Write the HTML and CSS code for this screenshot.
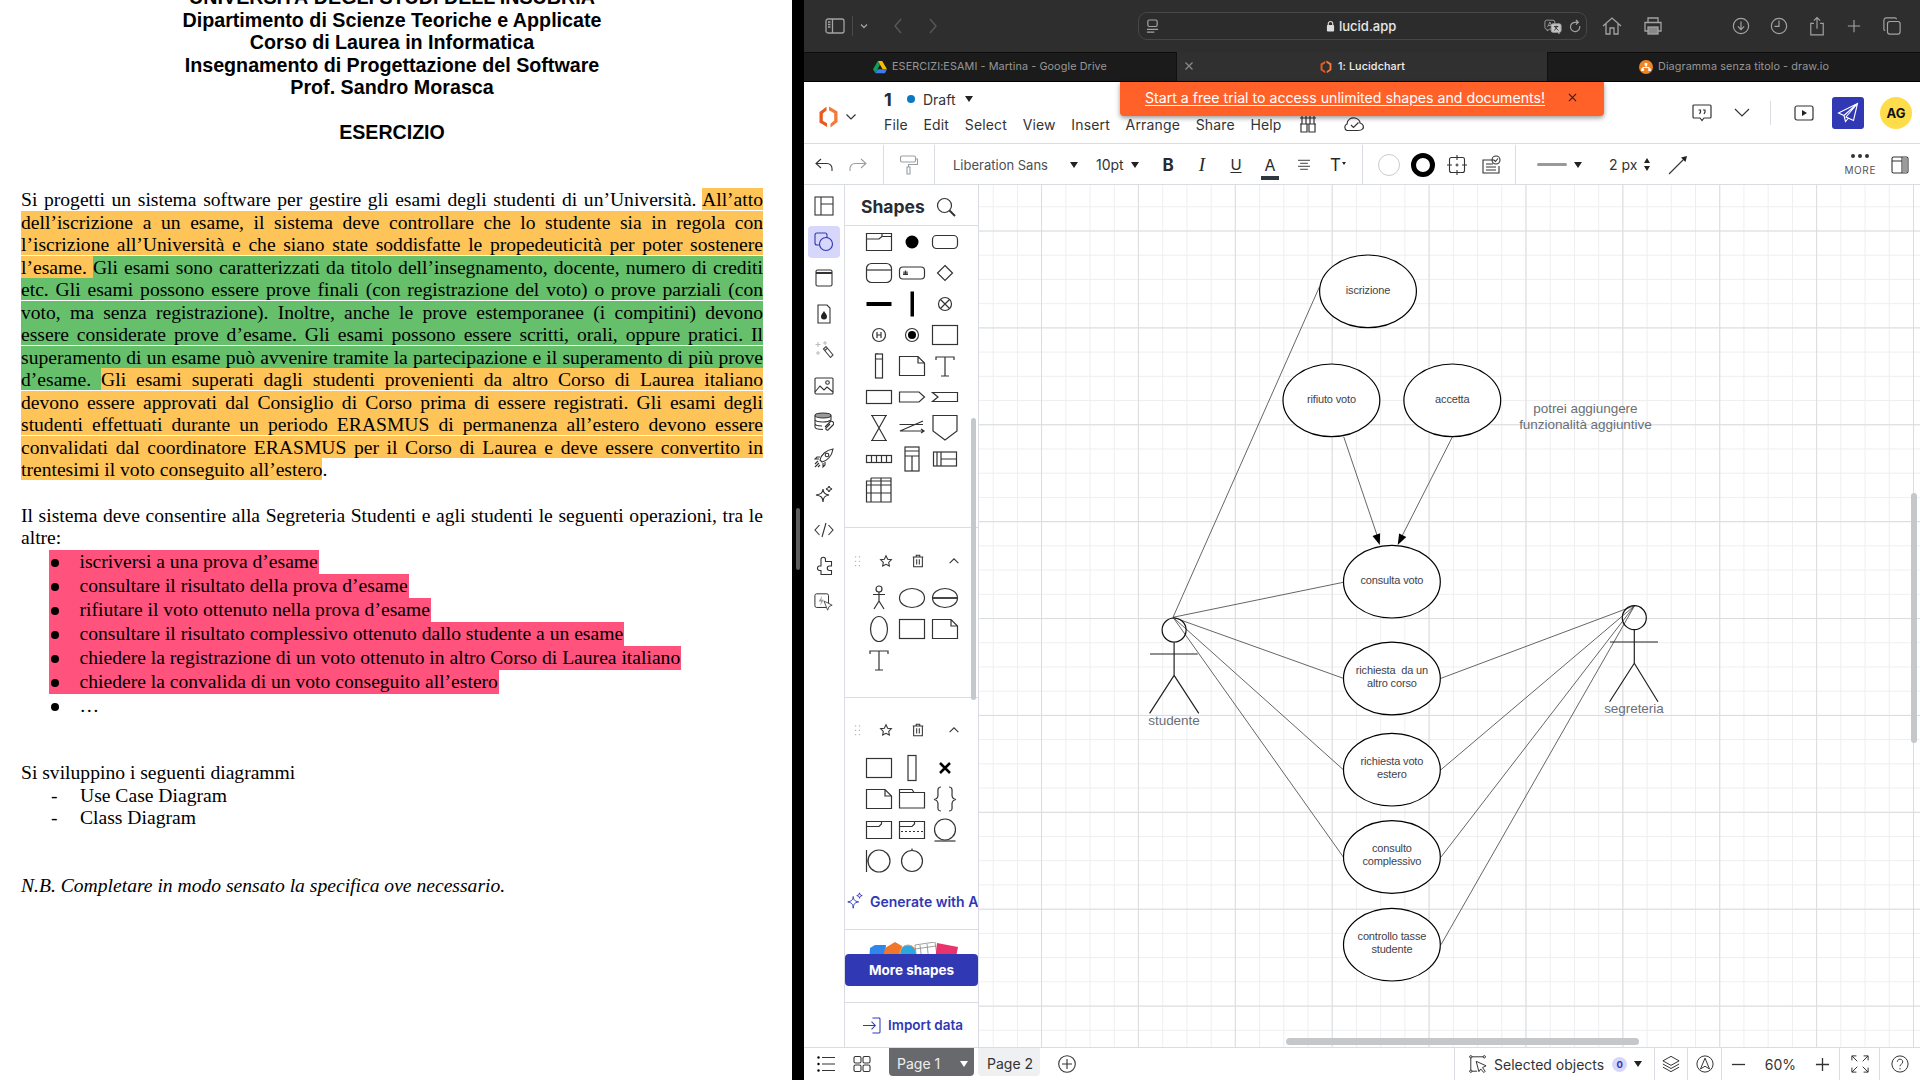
FILE: index.html
```html
<!DOCTYPE html>
<html lang="it">
<head>
<meta charset="utf-8">
<title>Lucidchart</title>
<link rel="stylesheet" href="styles.css">
</head>
<body>
<svg class="defs" width="0" height="0" aria-hidden="true">
  <defs>
    <symbol id="s-rect" viewBox="0 0 28 28"><rect x="1.5" y="4.5" width="25" height="19" /></symbol>
    <symbol id="s-note" viewBox="0 0 28 28"><path d="M1.5 4.500H20L26.500 11V23.500H1.500Z M20 4.500V11H26.500" /></symbol>
    <symbol id="s-t" viewBox="0 0 28 28"><path d="M5 8V5H23V8 M14 5V24 M10 24H18" /></symbol>
    <symbol id="s-star" viewBox="0 0 16 16"><path d="M8 2l1.900 3.900 4.300.6-3.100 3 .7 4.300L8 11.800l-3.800 2 .7-4.300-3.100-3 4.300-.6Z" /></symbol>
    <symbol id="s-trash" viewBox="0 0 16 16"><path d="M2 3.500H14 M6 3.500V1.500H10V3.500 M3 3.500V14.500H13V3.500 M6.500 6V12 M9.500 6V12" /></symbol>
    <symbol id="s-up" viewBox="0 0 16 16"><path d="M3 10.500L8 5.500L13 10.500" /></symbol>
    <symbol id="s-drag" viewBox="0 0 8 14"><path d="M1 1h1.500v1.500H1zM5.500 1H7v1.500H5.500zM1 6h1.500v1.500H1zM5.500 6H7v1.500H5.500zM1 11h1.500v1.500H1zM5.500 11H7v1.500H5.500z" /></symbol>
  </defs>
</svg>

<main class="desk">
  <section class="doc-pane">
    <article class="doc">
      <header class="doc-title">
        <div>UNIVERSITÀ DEGLI STUDI DELL’INSUBRIA</div>
        <div>Dipartimento di Scienze Teoriche e Applicate</div>
        <div>Corso di Laurea in Informatica</div>
        <div>Insegnamento di Progettazione del Software</div>
        <div>Prof. Sandro Morasca</div>
      </header>
      <h1 class="doc-h">ESERCIZIO</h1>
      <p class="doc-p first">Si progetti un sistema software per gestire gli esami degli studenti di un’Università. <span class="hl-o">All’atto dell’iscrizione a un esame, il sistema deve controllare che lo studente sia in regola con l’iscrizione all’Università e che siano state soddisfatte le propedeuticità per poter sostenere l’esame. </span><span class="hl-g">Gli esami sono caratterizzati da titolo dell’insegnamento, docente, numero di crediti etc. Gli esami possono essere prove finali (con registrazione del voto) o prove parziali (con voto, ma senza registrazione). Inoltre, anche le prove estemporanee (i compitini) devono essere considerate prove d’esame. Gli esami possono essere scritti, orali, oppure pratici. Il superamento di un esame può avvenire tramite la partecipazione e il superamento di più prove d’esame. </span><span class="hl-o">Gli esami superati dagli studenti provenienti da altro Corso di Laurea italiano devono essere approvati dal Consiglio di Corso prima di essere registrati. Gli esami degli studenti effettuati durante un periodo ERASMUS di permanenza all’estero devono essere convalidati dal coordinatore ERASMUS per il Corso di Laurea e deve essere convertito in trentesimi il voto conseguito all’estero</span>.</p>
      <p class="doc-p second">Il sistema deve consentire alla Segreteria Studenti e agli studenti le seguenti operazioni, tra le altre:</p>
      <ul class="ops">
        <li class="pink">iscriversi a una prova d’esame</li>
        <li class="pink">consultare il risultato della prova d’esame</li>
        <li class="pink">rifiutare il voto ottenuto nella prova d’esame</li>
        <li class="pink">consultare il risultato complessivo ottenuto dallo studente a un esame</li>
        <li class="pink">chiedere la registrazione di un voto ottenuto in altro Corso di Laurea italiano</li>
        <li class="pink">chiedere la convalida di un voto conseguito all’estero</li>
        <li>…</li>
      </ul>
      <p class="doc-p third">Si sviluppino i seguenti diagrammi</p>
      <ul class="diag">
        <li>Use Case Diagram</li>
        <li>Class Diagram</li>
      </ul>
      <p class="doc-p nb">N.B. Completare in modo sensato la specifica ove necessario.</p>
    </article>
  </section>

  <div class="divider"><span class="grabber"></span></div>

  <section class="browser">
    <div class="chrome">
      <svg class="cr cr-side" viewBox="0 0 20 16"><rect x="1" y="1" width="18" height="14" rx="2"/><path d="M7.500 1V15 M3 4H5.500 M3 6.500H5.500 M3 9H5.500"/></svg>
      <span class="cr-sep"></span>
      <svg class="cr cr-chev" viewBox="0 0 10 6"><path d="M2 1.500L5 4.500L8 1.500"/></svg>
      <svg class="cr cr-nav dim" viewBox="0 0 10 16"><path d="M8 1L2 8L8 15"/></svg>
      <svg class="cr cr-nav dim nav2" viewBox="0 0 10 16"><path d="M2 1L8 8L2 15"/></svg>
      <div class="addr">
        <svg class="cr cr-page" viewBox="0 0 14 16"><rect x="2" y="1" width="10" height="7" rx="1.500"/><path d="M1 11H13 M1 14H9"/></svg>
        <span class="addr-url"><svg class="lock" viewBox="0 0 10 13"><path d="M2.500 6V4a2.500 2.500 0 0 1 5 0V6" fill="none" stroke="#ddd" stroke-width="1.200"/><rect x="1" y="5.500" width="8" height="7" rx="1" fill="#ddd"/></svg>lucid.app</span>
        <svg class="cr cr-trans" viewBox="0 0 20 16"><path d="M3 1H10A2 2 0 0 1 12 3V9A2 2 0 0 1 10 11H6L3.500 13V11H3A2 2 0 0 1 1 9V3A2 2 0 0 1 3 1Z M4 8.500L6.500 3L9 8.500 M5 6.800H8"/><path d="M10 5H17A2 2 0 0 1 19 7V12.500A2 2 0 0 1 17 14.500V16L15 14.500H10A2 2 0 0 1 8 12.500V7A2 2 0 0 1 10 5Z" fill="#c4c4c4"/><path d="M11 8H16 M13.500 7V8 M15 8L11.500 12.500 M12 8.500L16 12.500" stroke="#2e2e2e"/></svg>
        <svg class="cr cr-rel" viewBox="0 0 14 16"><path d="M11.500 7.500A5 5 0 1 1 7 3.500H9 M7.500 1L10 3.500L7.500 6"/></svg>
      </div>
      <svg class="cr cr-home" viewBox="0 0 20 20"><path d="M1 10L10 2L19 10 M4 8V18H8V12H12V18H16V8"/></svg>
      <svg class="cr cr-print" viewBox="0 0 20 20"><path d="M5 6V2H15V6 M5 15H2V6.500H18V15H15"/><rect x="5" y="11" width="10" height="7" fill="#888"/></svg>
      <svg class="cr cr-dl" viewBox="0 0 20 20"><circle cx="10" cy="10" r="8.500"/><path d="M10 5V14 M6.500 10.500L10 14L13.500 10.500"/></svg>
      <svg class="cr cr-clock" viewBox="0 0 20 20"><circle cx="10" cy="10" r="8.500"/><path d="M10 4V10.500H5"/></svg>
      <svg class="cr cr-share" viewBox="0 0 18 22"><path d="M5.500 8H2V21H16V8H12.500 M9 14V2 M5.500 5L9 1.500L12.500 5"/></svg>
      <svg class="cr cr-plus" viewBox="0 0 16 16"><path d="M8 1V15 M1 8H15"/></svg>
      <svg class="cr cr-tabs" viewBox="0 0 20 20"><rect x="5" y="5" width="14" height="14" rx="2.500"/><path d="M15 2.500A1.500 1.500 0 0 0 13.500 1H3.500A2.500 2.500 0 0 0 1 3.500V13.500A1.500 1.500 0 0 0 2.500 15"/></svg>
    </div>

    <div class="tabs">
      <div class="tab tab-a">
        <svg class="fav" viewBox="0 0 16 14"><path d="M5.500 0H10.500L16 9.500H11Z" fill="#fbbc04"/><path d="M5.500 0L8 4.500L2.800 14L0 9.500Z" fill="#0f9d58"/><path d="M2.800 14L5.300 9.500H16L13.500 14Z" fill="#3b7dee"/></svg>
        <span>ESERCIZI:ESAMI - Martina - Google Drive</span>
      </div>
      <div class="tab tab-b">
        <svg class="tab-x" viewBox="0 0 10 10"><path d="M1.500 1.500L8.500 8.500 M8.500 1.500L1.500 8.500"/></svg>
        <svg class="fav" viewBox="0 0 16 18"><path d="M8.500 0.500L15 4.500V13L9 17V14L12.500 11.800V6L8.500 3.500Z" fill="#f4793a"/><path d="M7 1.200V4.200L3.500 6.300V11.800L7 14V17L1 13V4.800Z" fill="#e85a1e"/></svg>
        <span>1: Lucidchart</span>
      </div>
      <div class="tab tab-c">
        <svg class="fav" viewBox="0 0 16 16"><circle cx="8" cy="8" r="8" fill="#f08528"/><path d="M6.500 3.500H9.500V6.500H8.500V8H11.500L12.500 9.800H13.500V12.500H10.500V9.800H11L10.800 9H5.200L5 9.800H5.500V12.500H2.500V9.800H3.500L4.500 8H7.500V6.500H6.500Z" fill="#fff"/></svg>
        <span>Diagramma senza titolo - draw.io</span>
      </div>
    </div>

    <div class="app">
      <div class="toast"><a class="toast-link">Start a free trial to access unlimited shapes and documents!</a>
        <svg class="toast-x" viewBox="0 0 10 10"><path d="M1 1L9 9 M9 1L1 9"/></svg>
      </div>

      <header class="app-head">
        <div class="brand">
          <svg class="logo" viewBox="0 0 19 22"><path d="M10 .500L18.500 5.500V16L11.500 21.500V17.800L15.200 14.500V7.300L10 4.200Z" fill="#f4793a"/><path d="M8 21L.500 16.500V6L7.500 .800V4.400L3.800 7.500V14.700L8 17.300Z" fill="#e85a1e"/></svg>
          <svg class="ico ico-chev" viewBox="0 0 12 8"><path d="M1.500 1.500L6 6L10.500 1.500"/></svg>
        </div>
        <div class="titlecol">
          <div class="titlerow">
            <span class="docnum">1</span><span class="dot"></span><span class="draft">Draft</span><span class="tri"></span>
          </div>
          <nav class="menu">
            <span>File</span><span>Edit</span><span>Select</span><span>View</span><span>Insert</span><span>Arrange</span><span>Share</span><span>Help</span>
            <svg class="ico ico-gift" viewBox="0 0 18 20"><path d="M3 1V10 M7 1V10 M11 1V10 M15 1V10 M1 4H17 M1 10H17 M2 10V18H8V10 M10 10V18H16V10"/></svg>
            <svg class="ico ico-cloud" viewBox="0 0 22 16"><path d="M6 14.500H4A3.500 3.500 0 0 1 4 8C4 4 8 1 12 2C15 3 17 5 17 7C20 7.500 21.500 11 19.500 13C18.500 14.300 17 14.500 15 14.500Z"/><path d="M8 9L10.500 11.500L15.500 6.500"/></svg>
          </nav>
        </div>
        <div class="head-right">
          <svg class="ico ico-comment" viewBox="0 0 20 18"><path d="M2 1H18A1 1 0 0 1 19 2V13A1 1 0 0 1 18 14H12L10 16.500L8 14H2A1 1 0 0 1 1 13V2A1 1 0 0 1 2 1Z M6.500 6H8.500V8L7.500 10 M11 6H13V8L12 10"/></svg>
          <svg class="ico ico-down" viewBox="0 0 16 9"><path d="M1 1L8 8L15 1"/></svg>
          <span class="head-sep"></span>
          <svg class="ico ico-play" viewBox="0 0 20 16"><rect x="1" y="1" width="18" height="14" rx="2"/><path class="fill" d="M8 5L13 8L8 11Z"/></svg>
          <button class="send"><svg viewBox="0 0 22 22"><path d="M20.500 1.500L1.500 11L7 13.500L20.500 1.500L9 15L16.500 18.500Z M7 13.500L8.500 19.500L11.500 16" fill="none" stroke="#fff" stroke-width="1.100"/></svg></button>
          <span class="avatar">AG</span>
        </div>
      </header>

      <div class="toolbar">
        <div class="tg tg-a">
          <svg class="ti" viewBox="0 0 20 16"><path d="M7 2L2 6.500L7 11 M2 6.500H13A5 5 0 0 1 18 11.500V14"/></svg>
          <svg class="ti off" viewBox="0 0 20 16"><path d="M13 2L18 6.500L13 11 M18 6.500H7A5 5 0 0 0 2 11.500V14"/></svg>
        </div>
        <div class="tg tg-b">
          <svg class="ti off" viewBox="0 0 20 20"><rect x="1.500" y="1" width="15" height="6" rx="1.500"/><path d="M16.500 4H18.500V9.500H9.500V12 M8 12H11V19H8Z"/></svg>
        </div>
        <div class="tg tg-c">
          <div class="sel sel-font"><span>Liberation Sans</span><span class="tri"></span></div>
          <div class="sel sel-size"><span>10pt</span><span class="tri"></span></div>
          <span class="tbtn b">B</span>
          <span class="tbtn i">I</span>
          <span class="tbtn u">U</span>
          <span class="tbtn a">A</span>
          <span class="tbtn"><svg class="ti small" viewBox="0 0 16 14"><path d="M1 1.500H15 M3.500 5H12.500 M1 8.500H15 M3.500 12H12.500"/></svg></span>
          <span class="tbtn t">T<span class="tinytri"></span></span>
        </div>
        <div class="tg tg-d">
          <span class="tbtn"><span class="swatch"></span></span>
          <span class="tbtn"><span class="ring"></span></span>
          <span class="tbtn"><svg class="ti" viewBox="0 0 20 20"><rect x="2.500" y="2.500" width="15" height="15" rx="2"/><path d="M10 0V5 M10 15V20 M0 10H5 M15 10H20 M8.500 10H11.500 M10 8.500V11.500"/></svg></span>
          <span class="tbtn"><svg class="ti" viewBox="0 0 20 20"><path d="M13 5H2V18H18V11 M5 9H12 M5 12H15 M5 15H15"/><circle cx="15" cy="5" r="4"/><path d="M13 5L14.500 6.500L17 3.500"/></svg></span>
        </div>
        <div class="tg tg-e">
          <span class="linesample"></span><span class="tri"></span>
          <span class="px">2 px</span>
          <span class="stepper"><span class="tri up"></span><span class="tri"></span></span>
          <svg class="ti arrow" viewBox="0 0 20 20"><path d="M1 19L17 3"/><path class="fill" d="M19 1L17.500 7L13 2.500Z"/></svg>
        </div>
        <div class="tg tg-f">
          <div class="more"><span class="dots"><i></i><i></i><i></i></span><span class="more-t">MORE</span></div>
          <svg class="ti panelico" viewBox="0 0 18 18"><rect x="1" y="1" width="16" height="16" rx="1.500"/><path class="fill" d="M12 2H16V16H12Z" opacity=".45"/><path d="M1 5H11 M11 1V17"/></svg>
        </div>
      </div>

      <div class="work">
        <nav class="rail">
          <svg class="ri" viewBox="0 0 20 20"><rect x="1" y="1" width="18" height="18"/><path d="M7 1V19 M7 8H19"/></svg>
          <span class="ri-on"><svg class="ri blue" viewBox="0 0 20 20"><rect x="1" y="1" width="12" height="12" rx="2"/><circle cx="12" cy="12" r="6.500" fill="#d6d7fb"/></svg></span>
          <svg class="ri" viewBox="0 0 20 20"><rect x="2" y="2" width="16" height="16" rx="1.500"/><path d="M2 5H18" stroke-width="2"/></svg>
          <svg class="ri" viewBox="0 0 20 20"><path d="M4 1H13L16 4V19H4Z"/><path class="fill" d="M10 7C11.500 9.500 13 10.500 13 12.500A3 3 0 0 1 7 12.500C7 10.500 8.500 9.500 10 7Z"/></svg>
          <svg class="ri pale" viewBox="0 0 20 20"><path d="M4 2V7 M1.500 4.500H6.500 M11 1V5 M9 3H13 M4 11V15 M2 13H6"/><path class="dk" d="M9.500 9L12 6.500L19 15L16.500 17.500Z M11 10.500L13.500 8"/></svg>
          <svg class="ri" viewBox="0 0 20 18"><rect x="1" y="1" width="18" height="16" rx="1"/><path d="M1 15L6 9L10 13L13 10L19 15"/><circle cx="13.500" cy="5.500" r="1.800"/></svg>
          <svg class="ri" viewBox="0 0 20 20"><ellipse class="sh" cx="9" cy="3.500" rx="8" ry="2.500"/><path d="M1 3.500V15C1 16.500 5 17.500 9 17.500 M1 7.500C1 9 5 10 9 10C12 10 15 9.500 17 8V3.500 M1 11.500C1 13 4 14 8 14"/><path d="M11 15L16 10A2 2 0 0 1 19 13L14 18A1.500 1.500 0 0 1 12 16L16 12"/></svg>
          <svg class="ri" viewBox="0 0 20 20"><path d="M8 14L6 12C7 7 12 2 19 1C18 8 13 13 8 14Z M6 9H3L1 11H5 M11 14V17L9 19V15"/><circle cx="13" cy="7" r="1.800"/><path d="M1 16L4 13 M1 19L5 15 M4 19L6 17"/></svg>
          <svg class="ri" viewBox="0 0 20 20"><path d="M9 5C9.500 9 10.500 10 15 11C10.500 12 9.500 13 9 18C8.500 13 7.500 12 2 11C7.500 10 8.500 9 9 5Z M15 2C15.300 4 16 4.500 18 5C16 5.500 15.300 6 15 8C14.700 6 14 5.500 12 5C14 4.500 14.700 4 15 2Z"/></svg>
          <svg class="ri" viewBox="0 0 20 16"><path d="M5.500 3L1 8L5.500 13 M14.500 3L19 8L14.500 13 M12 1L8 15"/></svg>
          <svg class="ri" viewBox="0 0 20 20"><path d="M7 3.500A2.200 2.200 0 0 1 11.500 3.500V5.500H17.500V10H15.500A2.200 2.200 0 0 0 15.500 14.500H17.500V18.500H7V14.500H5A2.400 2.400 0 0 1 5 10H7V5.500Z"/></svg>
          <svg class="ri" viewBox="0 0 22 20"><rect x="1" y="1" width="15" height="15" rx="2"/><path class="fill" d="M9 3L5 9.500H8L6.500 14L11 7.500H8Z" opacity=".45"/><path class="wfill" d="M11 9L20 13.500L16.500 15L15 19Z"/></svg>
        </nav>

        <aside class="panel">
          <div class="panel-head">
            <h2>Shapes</h2>
            <svg class="sq search" viewBox="0 0 20 20"><circle cx="8.500" cy="8.500" r="7"/><path d="M13.500 13.500L19 19" stroke-width="2"/></svg>
          </div>
          <div class="sec sec1">
            <div class="shapes">
              <svg class="sq" viewBox="0 0 28 28"><path d="M1.500 5.500H26.500V22.500H1.500Z M1.500 11H14L17 8.500V5.500 M17 8.500H26.500"/></svg>
              <svg class="sq" viewBox="0 0 28 28"><circle class="solid" cx="14" cy="14" r="6.500"/></svg>
              <svg class="sq" viewBox="0 0 28 28"><rect x="1.500" y="7.500" width="25" height="13" rx="4"/></svg>
              <svg class="sq" viewBox="0 0 28 28"><rect x="1.500" y="4.500" width="25" height="19" rx="5"/><path d="M1.500 11H26.500"/></svg>
              <svg class="sq" viewBox="0 0 28 28"><rect x="1.500" y="8" width="25" height="12" rx="3.500"/><path d="M5 15.500H10 M6 15V12.500 M7.500 15V11.500 M9 15V12.500"/></svg>
              <svg class="sq" viewBox="0 0 28 28"><path d="M14 6.500L21.500 14L14 21.500L6.500 14Z"/></svg>
              <svg class="sq" viewBox="0 0 28 28"><rect class="solid" x="1.500" y="12" width="25" height="4"/></svg>
              <svg class="sq" viewBox="0 0 28 28"><rect class="solid" x="12.500" y="1.500" width="3.500" height="25"/></svg>
              <svg class="sq" viewBox="0 0 28 28"><circle cx="14" cy="14" r="6.500"/><path d="M9.500 9.500L18.500 18.500 M18.500 9.500L9.500 18.500"/></svg>
              <svg class="sq" viewBox="0 0 28 28"><circle cx="14" cy="14" r="6.500"/><path d="M12 11V17 M16 11V17 M12 14H16"/></svg>
              <svg class="sq" viewBox="0 0 28 28"><circle cx="14" cy="14" r="6.500"/><circle class="solid" cx="14" cy="14" r="4"/></svg>
              <svg class="sq"><use href="#s-rect"/></svg>
              <svg class="sq" viewBox="0 0 28 28"><rect x="10.500" y="2" width="7" height="24"/><path d="M10.500 7H17.500 M12 2V1 "/></svg>
              <svg class="sq"><use href="#s-note"/></svg>
              <svg class="sq"><use href="#s-t"/></svg>
              <svg class="sq" viewBox="0 0 28 28"><rect x="1.500" y="7.500" width="25" height="13"/></svg>
              <svg class="sq" viewBox="0 0 28 28"><path d="M1.500 9H21L26.500 14L21 19H1.500Z"/></svg>
              <svg class="sq" viewBox="0 0 28 28"><path d="M1.500 9.500H26.500V18.500H1.500L7 14Z"/></svg>
              <svg class="sq" viewBox="0 0 28 28"><path d="M6 1.500H22 M6 26.500H22 M7 1.500L21 26.500 M21 1.500L7 26.500"/></svg>
              <svg class="sq" viewBox="0 0 28 28"><path d="M1.500 10.500H25 M25 7L2 17H26 M23 15L26 17L23 19"/></svg>
              <svg class="sq" viewBox="0 0 28 28"><path d="M2 1.500H26V17L14 26L2 17Z"/></svg>
              <svg class="sq" viewBox="0 0 28 28"><rect x="1.500" y="10.500" width="25" height="7"/><path d="M6.500 10.500V17.500 M11.500 10.500V17.500 M16.500 10.500V17.500 M21.500 10.500V17.500"/></svg>
              <svg class="sq" viewBox="0 0 28 28"><rect x="7" y="2" width="14" height="24"/><path d="M7 6H21 M7 11H21 M14 11V26"/></svg>
              <svg class="sq" viewBox="0 0 28 28"><rect x="2.500" y="7" width="23" height="14"/><path d="M6 7V21 M10 7V21 M10 14H25.500"/></svg>
              <svg class="sq" viewBox="0 0 28 28"><path d="M1.500 5H26V26H1.500Z M6 2V26 M16 2V26 M6 2H26V5 M1.500 9H26 M1.500 17H26"/></svg>
            </div>
          </div>
          <div class="sec sec2">
            <div class="sec-head">
              <svg class="sh-ic drag"><use href="#s-drag"/></svg>
              <svg class="sh-ic"><use href="#s-star"/></svg>
              <svg class="sh-ic"><use href="#s-trash"/></svg>
              <svg class="sh-ic"><use href="#s-up"/></svg>
            </div>
            <div class="shapes">
              <svg class="sq" viewBox="0 0 28 28"><circle cx="14" cy="5" r="3"/><path d="M14 8V17 M8 10.500H20 M14 17L9 25 M14 17L19 25"/></svg>
              <svg class="sq" viewBox="0 0 28 28"><ellipse cx="14" cy="14" rx="12.500" ry="9.500"/></svg>
              <svg class="sq" viewBox="0 0 28 28"><ellipse cx="14" cy="14" rx="12.500" ry="9.500"/><path d="M1.500 14H26.500" stroke-width="1.800"/></svg>
              <svg class="sq" viewBox="0 0 28 28"><ellipse cx="14" cy="14" rx="8.500" ry="12.500"/></svg>
              <svg class="sq"><use href="#s-rect"/></svg>
              <svg class="sq"><use href="#s-note"/></svg>
              <svg class="sq"><use href="#s-t"/></svg>
            </div>
          </div>
          <div class="sec sec3">
            <div class="sec-head">
              <svg class="sh-ic drag"><use href="#s-drag"/></svg>
              <svg class="sh-ic"><use href="#s-star"/></svg>
              <svg class="sh-ic"><use href="#s-trash"/></svg>
              <svg class="sh-ic"><use href="#s-up"/></svg>
            </div>
            <div class="shapes">
              <svg class="sq"><use href="#s-rect"/></svg>
              <svg class="sq" viewBox="0 0 28 28"><rect x="10" y="1.500" width="8" height="25"/></svg>
              <svg class="sq" viewBox="0 0 28 28"><path class="thick" d="M9 9L19 19 M19 9L9 19"/></svg>
              <svg class="sq"><use href="#s-note"/></svg>
              <svg class="sq" viewBox="0 0 28 28"><path d="M1.500 7.500V23H26.500V7.500H16L14 4.500H1.500V7.500H16"/></svg>
              <svg class="sq" viewBox="0 0 28 28"><path d="M10 2C6 2 7 6 7 10C7 12 6 14 3 14.500C6 15 7 17 7 19C7 23 6 26 10 26 M18 2C22 2 21 6 21 10C21 12 22 14 25 14.500C22 15 21 17 21 19C21 23 22 26 18 26"/></svg>
              <svg class="sq" viewBox="0 0 28 28"><path d="M1.500 5.500H26.500V22.500H1.500Z M1.500 10.500H14L16.500 8V5.500"/></svg>
              <svg class="sq" viewBox="0 0 28 28"><path d="M1.500 5.500H26.500V22.500H1.500Z M1.500 10.500H14L16.500 8V5.500"/><path d="M3 15.500H25" stroke-dasharray="2 2"/></svg>
              <svg class="sq" viewBox="0 0 28 28"><circle cx="14" cy="13.500" r="10.500"/><path d="M3.500 25H24.500"/></svg>
              <svg class="sq" viewBox="0 0 28 28"><path d="M1.500 3V25 M1.500 14H3.500"/><circle cx="14" cy="14" r="11"/></svg>
              <svg class="sq" viewBox="0 0 28 28"><circle cx="14" cy="14" r="10.500"/><path d="M14 1.500V4"/></svg>
            </div>
            <div class="genai">
              <svg class="gen-ic" viewBox="0 0 20 20"><path d="M8 5C8.500 9 9.500 10 14 11C9.500 12 8.500 13 8 18C7.500 13 6.500 12 2 11C6.500 10 7.500 9 8 5Z M15 1C15.300 3 16 3.500 18 4C16 4.500 15.300 5 15 7C14.700 5 14 4.500 12 4C14 3.500 14.700 3 15 1Z"/></svg>
              <span>Generate with AI</span>
            </div>
          </div>
          <div class="sec sec4">
            <svg class="thumbs" viewBox="0 0 133 12">
              <path d="M25 6L30 3H41L39 20H24Z" fill="#2e86f0"/>
              <path d="M40 6L50 0L57 4L54 20H37Z" fill="#f0762a"/>
              <circle cx="63" cy="11" r="8" fill="#2ea7e0" stroke="#f0a060"/>
              <path d="M70 3L90 0L93 20H72Z" fill="#fff" stroke="#888" stroke-width=".8"/>
              <path d="M75 3L77 20 M82 2L84 20 M70 7L91 4" fill="none" stroke="#888" stroke-width=".8"/>
              <path d="M92 1L113 5L110 20H90Z" fill="#e8336d"/>
            </svg>
            <button class="moreshapes">More shapes</button>
          </div>
          <div class="importrow">
            <svg class="imp-ic" viewBox="0 0 20 18"><path d="M11 1H18A1 1 0 0 1 19 2V16A1 1 0 0 1 18 17H11 M1 9H14 M10 5L14 9L10 13"/></svg>
            <span>Import data</span>
          </div>
          <span class="panel-scroll"></span>
        </aside>

        <div class="canvas">
          <svg class="diagram" viewBox="979 185 941 862" width="941" height="862">
            <g class="edges">
              <line x1="1173" y1="617.300" x2="1319.500" y2="286.700"/>
              <line x1="1173" y1="617.300" x2="1343.300" y2="582.300"/>
              <line x1="1173" y1="617.300" x2="1343.300" y2="678.300"/>
              <line x1="1173" y1="617.300" x2="1343.300" y2="769.700"/>
              <line x1="1173" y1="617.300" x2="1343.300" y2="857"/>
              <line x1="1634.600" y1="605.700" x2="1441" y2="678.300"/>
              <line x1="1634.600" y1="605.700" x2="1441" y2="769.700"/>
              <line x1="1634.600" y1="605.700" x2="1441" y2="857"/>
              <line x1="1634.600" y1="605.700" x2="1441" y2="944.700"/>
              <line x1="1343.700" y1="436.700" x2="1378" y2="538"/>
              <line x1="1452.500" y1="436.700" x2="1400" y2="540"/>
            </g>
            <polygon class="head" points="1379.800,545 1380.100,533.300 1372.500,535.900"/>
            <polygon class="head" points="1397.700,545 1406.300,537 1399.100,533.400"/>
            <g class="nodes">
              <ellipse cx="1368" cy="291.300" rx="48.400" ry="36.300"/>
              <ellipse cx="1331.400" cy="400.300" rx="48.400" ry="36.300"/>
              <ellipse cx="1452.300" cy="400.300" rx="48.400" ry="36.300"/>
              <ellipse cx="1391.900" cy="581.700" rx="48.400" ry="36.300"/>
              <ellipse cx="1391.900" cy="678.500" rx="48.400" ry="36.300"/>
              <ellipse cx="1391.900" cy="769.700" rx="48.400" ry="36.300"/>
              <ellipse cx="1391.900" cy="857" rx="48.400" ry="36.300"/>
              <ellipse cx="1391.900" cy="944.700" rx="48.400" ry="36.300"/>
            </g>
            <g class="actor">
              <circle cx="1174.100" cy="630" r="12"/>
              <path d="M1174.100 642V675.300 M1150 654H1197.700 M1174.100 675.300L1149.600 713.300 M1174.100 675.300L1198.800 713.300"/>
              <circle cx="1634.300" cy="617.700" r="12"/>
              <path d="M1634.300 629.700V663.300 M1610 642H1658 M1634.300 663.300L1609.600 701.700 M1634.300 663.300L1658 701.700"/>
            </g>
            <g class="lab">
              <text x="1368" y="294">iscrizione</text>
              <text x="1331.400" y="403">rifiuto voto</text>
              <text x="1452.300" y="403">accetta</text>
              <text x="1391.900" y="584">consulta voto</text>
              <text x="1391.900" y="674">richiesta  da un</text>
              <text x="1391.900" y="687">altro corso</text>
              <text x="1391.900" y="765">richiesta voto</text>
              <text x="1391.900" y="778">estero</text>
              <text x="1391.900" y="852">consulto</text>
              <text x="1391.900" y="865">complessivo</text>
              <text x="1391.900" y="940">controllo tasse</text>
              <text x="1391.900" y="953">studente</text>
            </g>
            <g class="note">
              <text x="1174" y="725">studente</text>
              <text x="1633.900" y="713">segreteria</text>
              <text x="1585.400" y="412.500">potrei aggiungere</text>
              <text x="1585.400" y="428.500">funzionalità aggiuntive</text>
            </g>
          </svg>
          <span class="vscroll"></span>
          <span class="hscroll"></span>
        </div>
      </div>

      <footer class="statusbar">
        <div class="pages">
          <svg class="bi list" viewBox="0 0 18 16"><path d="M5 1.500H18 M5 8H18 M5 14.500H18"/><circle class="solid" cx="1.500" cy="1.500" r="1.200"/><circle class="solid" cx="1.500" cy="8" r="1.200"/><circle class="solid" cx="1.500" cy="14.500" r="1.200"/></svg>
          <svg class="bi gridi" viewBox="0 0 18 16"><rect x="1" y=".5" width="7" height="6.500" rx="1.500"/><rect x="10" y=".5" width="7" height="6.500" rx="1.500"/><rect x="1" y="9" width="7" height="6.500" rx="1.500"/><rect x="10" y="9" width="7" height="6.500" rx="1.500"/></svg>
          <div class="page on"><span>Page 1</span><span class="tri"></span></div>
          <div class="page">Page 2</div>
          <svg class="bi addp" viewBox="0 0 18 18"><circle cx="9" cy="9" r="8.300"/><path d="M9 4V14 M4 9H14"/></svg>
        </div>
        <div class="status-r">
          <div class="st st-sel">
            <svg class="bi" viewBox="0 0 20 20"><path d="M2 2H17 M2 2V18 M2 18H9"/><circle class="wh" cx="2" cy="2" r="1.300"/><circle class="wh" cx="17" cy="2" r="1.300"/><circle class="wh" cx="2" cy="18" r="1.300"/><path class="wh" d="M8 7L19 12L15 14L18 18L16.500 19.500L13 15.500L11 18.500Z"/></svg>
            <span>Selected objects</span>
            <span class="count">0</span>
            <span class="tri"></span>
          </div>
          <div class="st st-lay"><svg class="bi" viewBox="0 0 20 20"><path d="M10 1.500L19 6.500L10 11.500L1 6.500Z M1 10L10 15L19 10 M1 13.500L10 18.500L19 13.500"/></svg></div>
          <div class="st st-a"><svg class="bi" viewBox="0 0 20 20"><circle cx="10" cy="10" r="9"/><path d="M10 3.500L15 15.500L10 12.500L5 15.500Z"/></svg></div>
          <div class="st st-zoom">
            <svg class="bi zoomi" viewBox="0 0 16 16"><path d="M1 8H15"/></svg>
            <span>60%</span>
            <svg class="bi zoomi" viewBox="0 0 16 16"><path d="M1 8H15 M8 1V15"/></svg>
          </div>
          <div class="st st-full"><svg class="bi" viewBox="0 0 20 20"><path d="M1 6V1H6 M1 1L7 7 M14 1H19V6 M19 1L13 7 M1 14V19H6 M1 19L7 13 M19 14V19H14 M19 19L13 13"/></svg></div>
          <div class="st st-help"><svg class="bi" viewBox="0 0 20 20"><circle cx="10" cy="10" r="9"/><path d="M7 7.500A3 3 0 1 1 11.500 10.200C10.500 10.800 10 11.500 10 12.500 M10 14.500V16"/></svg></div>
        </div>
      </footer>
    </div>
  </section>
</main>
</body>
</html>
```

FILE: styles.css
```css
* { box-sizing: border-box; }
html, body { margin: 0; height: 100%; overflow: hidden; background: #000; }
.defs { position: absolute; }
.desk { display: flex; width: 1920px; height: 1080px; }

/* document pane */
.doc-pane { width: 792px; height: 1080px; background: #fff; overflow: hidden; flex: none; }
.doc { margin-top: -14px; padding: 0 29px 0 21px; font-family: "Liberation Serif", "Times New Roman", serif; font-size: 19.600px; line-height: 22.5px; color: #000; }
.doc-title { font-family: "Liberation Sans", Arial, sans-serif; font-weight: 700; text-align: center; font-size: 19.700px; }
.doc-h { margin: 22px 0 0; font: 700 19.600px/22.5px "Liberation Sans", Arial, sans-serif; text-align: center; }
.doc-p { margin: 0; text-align: justify; }
.first { margin-top: 45.5px; }
.second { margin-top: 23.500px; }
.hl-o { background: #ffc457; padding: .5px 0; }
.hl-g { background: #66bf6b; padding: .5px 0; }
.ops { list-style: none; margin: 0 0 0 0; padding: 0 0 0 28px; line-height: 24px; }
.ops li { position: relative; width: fit-content; padding: 0 1px 0 30.500px; height: 24px; }
.ops li::before { content: ""; position: absolute; left: 2px; top: 9px; width: 8px; height: 8px; border-radius: 50%; background: #000; }
.ops li.pink { background: #ff527d; }
.third { margin-top: 44.500px; }
.diag { list-style: none; margin: 0; padding: 0 0 0 59px; }
.diag li { position: relative; }
.diag li::before { content: "-"; position: absolute; left: -29px; }
.nb { margin-top: 45.5px; font-style: italic; }

.divider { width: 12px; flex: none; background: #000; display: flex; align-items: flex-start; justify-content: center; }
.grabber { width: 4px; height: 62px; margin-top: 508px; border-radius: 2px; background: #5c5c5c; }

/* browser */
.browser { flex: 1; display: flex; flex-direction: column; min-width: 0; }
.chrome { height: 52px; background: #2e2e2e; display: flex; align-items: center; position: relative; flex: none; }
.cr { fill: none; stroke: #a3a3a3; stroke-width: 1.300; flex: none; }
.dim { stroke: #5a5a5a; }
.cr-side { width: 20px; height: 16px; margin-left: 21px; }
.cr-sep { width: 1px; height: 20px; background: #4a4a4a; margin-left: 7px; }
.cr-chev { width: 10px; height: 6px; margin-left: 6px; }
.cr-nav { width: 10px; height: 16px; margin-left: 24px; }
.nav2 { margin-left: 25px; }
.addr { width: 449px; height: 28px; margin-left: 200px; border: 1px solid #474747; border-radius: 9px; display: flex; align-items: center; padding: 0 4px 0 7px; background: #2c2c2c; position: relative; }
.cr-page { width: 13px; height: 15px; }
.addr-url { position: absolute; left: 187px; top: 4px; color: #e8e8e8; font: 500 13px/18px Inter, sans-serif; display: flex; align-items: center; gap: 4px; }
.lock { width: 9px; height: 12px; }
.cr-trans { width: 18px; height: 15px; margin-left: auto; stroke-width: 1; }
.cr-rel { width: 13px; height: 15px; margin-left: 7px; }
.cr-home { width: 20px; height: 20px; margin-left: 15px; }
.cr-print { width: 20px; height: 20px; margin-left: 21px; }
.cr-dl { width: 18px; height: 18px; margin-left: 69px; }
.cr-clock { width: 18px; height: 18px; margin-left: 20px; }
.cr-share { width: 16px; height: 20px; margin-left: 21px; }
.cr-plus { width: 14px; height: 14px; margin-left: 22px; }
.cr-tabs { width: 18px; height: 18px; margin-left: 22px; }

.tabs { height: 29px; display: flex; background: #1b1b1b; flex: none; font: 400 10.800px/14px Inter, sans-serif; letter-spacing: .1px; }
.tab { display: flex; align-items: center; justify-content: center; gap: 5px; color: #979797; position: relative; border-top: 1px solid #0c0c0c; }
.tab-a { width: 372px; }
.tab-b { width: 372px; background: #303030; color: #f0f0f0; font-weight: 500; border-top: 0; border-left: 1px solid #111; border-right: 1px solid #111; }
.tab-c { flex: 1; }
.fav { width: 14px; height: 14px; flex: none; }
.tab-x { position: absolute; left: 7px; top: 9px; width: 10px; height: 10px; fill: none; stroke: #8b8b8b; stroke-width: 1.200; }

/* app */
.app { flex: 1; position: relative; display: flex; flex-direction: column; background: #fff; font-family: Inter, sans-serif; color: #333; min-height: 0; border-top: 1px solid #000; }
.toast { position: absolute; left: 316px; top: 0; width: 484px; height: 34px; padding-bottom: 3px; background: #ff6128; border-radius: 0 0 4px 4px; box-shadow: 0 2px 5px rgba(0,0,0,.4); z-index: 5; display: flex; align-items: center; padding-left: 25px; color: #fff; font-size: 14.150px; }
.toast-link { text-decoration: underline; text-underline-offset: 2px; white-space: nowrap; }
.toast-x { width: 9px; height: 9px; margin-left: 23px; fill: none; stroke: #222; stroke-width: 1.200; flex: none; }

.ico { fill: none; stroke: #333; stroke-width: 1.200; flex: none; }
.ico .fill, .ti .fill, .ri .fill { fill: #222; stroke: none; }
.app-head { height: 62px; display: flex; flex: none; border-bottom: 1px solid #d9dce0; }
.brand { width: 80px; display: flex; align-items: center; padding: 9px 0 0 15px; flex: none; }
.logo { width: 19px; height: 22px; }
.ico-chev { width: 12px; height: 8px; margin-left: 7px; }
.titlecol { display: flex; flex-direction: column; }
.titlerow { display: flex; align-items: center; height: 20px; margin-top: 7px; }
.docnum { font-weight: 700; font-size: 18px; width: 23px; color: #282c33; }
.dot { width: 8px; height: 8px; border-radius: 50%; background: #0a78c2; margin-right: 8px; }
.draft { font-size: 14px; color: #333; }
.tri { width: 0; height: 0; border-left: 4px solid transparent; border-right: 4px solid transparent; border-top: 6px solid #222; flex: none; display: inline-block; }
.tri.up { border-top: 0; border-bottom: 6px solid #222; }
.titlerow .tri { margin-left: 9px; }
.menu { display: flex; align-items: center; gap: 15.700px; font-size: 14px; height: 20px; margin-top: 5px; letter-spacing: .15px; white-space: nowrap; }
.ico-gift { width: 18px; height: 20px; margin-left: 2px; }
.ico-cloud { width: 22px; height: 16px; margin-left: 10px; }
.head-right { margin-left: auto; display: flex; align-items: center; padding-right: 8px; }
.ico-comment { width: 20px; height: 18px; }
.ico-down { width: 16px; height: 9px; margin-left: 22px; }
.head-sep { width: 1px; height: 24px; background: #d9dce0; margin-left: 20px; }
.ico-play { width: 20px; height: 16px; margin-left: 23px; }
.send { width: 32px; height: 32px; margin-left: 18px; background: #3038b4; border: 0; border-radius: 3px; padding: 5px; }
.send svg { width: 22px; height: 22px; display: block; }
.avatar { width: 32px; height: 32px; margin-left: 16px; border-radius: 50%; background: #ffdd4a; color: #111; font: 700 13px/32px Inter, sans-serif; text-align: center; }

.toolbar { height: 41px; display: flex; flex: none; border-bottom: 1px solid #d9dce0; font-size: 13.500px; color: #333; padding-top: 1px; }
.tg { display: flex; align-items: center; border-right: 1px solid #d9dce0; flex: none; }
.ti { width: 18px; height: 16px; fill: none; stroke: #333; stroke-width: 1.100; flex: none; }
.ti.off { stroke: #9a9ea3; }
.ti.small { width: 14px; height: 12px; }
.tg-a { width: 80px; padding-left: 3px; }
.tg-a .ti { width: 20px; margin: 0 7px; }
.tg-b { width: 51px; justify-content: center; }
.tg-b .ti { height: 20px; width: 20px; }
.tg-c { width: 428px; padding-left: 18px; }
.sel { display: flex; align-items: center; }
.sel-font { width: 130px; justify-content: space-between; padding-right: 5px; color: #4a4e55; font-size: 13px; }
.sel-size { width: 55px; margin-left: 13px; gap: 7px; font-size: 14px; }
.tbtn { width: 34px; height: 30px; display: flex; align-items: center; justify-content: center; flex: none; font-size: 17px; color: #2a2a2a; position: relative; }
.tbtn.b { font-weight: 700; }
.tbtn.i { font-style: italic; font-family: "Liberation Serif", serif; font-size: 19px; font-weight: 400; }
.tbtn.u { text-decoration: underline; font-size: 15px; text-underline-offset: 2px; }
.tbtn.a { font-size: 16px; }
.tbtn.a::after { content: ""; position: absolute; left: 8px; bottom: 0; width: 18px; height: 4px; background: #2f3640; }
.tbtn.t { font-weight: 400; }
.tinytri { width: 0; height: 0; border-left: 2.500px solid transparent; border-right: 2.500px solid transparent; border-top: 3px solid #222; margin-left: 1px; margin-bottom: 3px; }
.tg-d { width: 153px; padding-left: 9px; }
.tg-d .ti { width: 20px; height: 20px; }
.swatch { width: 22px; height: 22px; border-radius: 50%; border: 1px solid #c9ccd0; background: #fff; }
.ring { width: 24px; height: 24px; border-radius: 50%; border: 5px solid #000; }
.tg-e { width: 193px; border-right: 0; padding-left: 21px; }
.linesample { width: 30px; height: 3px; background: #999; border-radius: 2px; }
.tg-e > .tri { margin-left: 7px; }
.px { margin-left: 27px; font-size: 14px; }
.stepper { display: flex; flex-direction: column; gap: 3px; margin-left: 7px; }
.stepper .tri { border-left-width: 3.500px; border-right-width: 3.500px; border-top-width: 5px; }
.stepper .tri.up { border-bottom-width: 5px; border-top-width: 0; }
.arrow { width: 20px; height: 20px; margin-left: 18px; }
.tg-f { flex: 1; border-right: 0; justify-content: flex-end; padding-right: 11px; }
.more { display: flex; flex-direction: column; align-items: center; gap: 7px; margin-right: 15px; }
.dots { display: flex; gap: 3px; }
.dots i { width: 4px; height: 4px; border-radius: 50%; background: #333; }
.more-t { font-size: 10px; line-height: 10px; letter-spacing: .6px; color: #555; }
.panelico { width: 18px; height: 18px; }

.work { flex: 1; display: flex; min-height: 0; position: relative; }
.rail { width: 41px; flex: none; display: flex; flex-direction: column; align-items: center; border-right: 1px solid #d9dce0; padding: 11px 0 0; background: #fff; }
.ri { width: 20px; height: 20px; fill: none; stroke: #333; stroke-width: 1.100; flex: none; margin-bottom: 16px; }
.ri.pale { stroke: #b9bcc0; }
.ri .dk { stroke: #444; }
.ri .wfill { fill: #fff; stroke: #555; }
.ri .sh { fill: #999; }
.ri-on { width: 32px; height: 32px; margin: -6px 0 10px; background: #d6d7fb; border-radius: 4px; display: flex; align-items: center; justify-content: center; flex: none; }
.ri.blue { stroke: #3038b4; margin: 0; }

.panel { width: 134px; flex: none; position: relative; display: flex; flex-direction: column; background: #fff; border-right: 1px solid #d9dce0; overflow: hidden; }
.panel-head { height: 41px; display: flex; align-items: center; padding: 3px 0 0 16px; border-bottom: 1px solid #d9dce0; flex: none; }
.panel-head h2 { margin: 0; font-size: 17.500px; font-weight: 700; color: #282c33; }
.sq { width: 28px; height: 28px; fill: none; stroke: #333; stroke-width: 1.200; overflow: visible; }
.sq .solid, .solid { fill: #000; stroke: none; }
.sq .thick { stroke: #000; stroke-width: 2.500; }
.search { width: 20px; height: 20px; margin-left: 11px; }
.shapes { display: grid; grid-template-columns: repeat(3, 33px); grid-auto-rows: 31px; justify-items: center; align-items: center; }
.sec { flex: none; border-bottom: 1px solid #d9dce0; padding-left: 17px; }
.sec1 { height: 302px; }
.sec2 { height: 170px; padding-top: 18px; }
.sec3 { height: 232px; padding-top: 17px; }
.sec-head { display: flex; align-items: center; height: 30px; }
.sec2 .shapes { margin-top: 6px; }
.sec3 .shapes { margin-top: 7px; }
.sh-ic { width: 14px; height: 14px; fill: none; stroke: #333; stroke-width: 1.200; margin-left: 18px; flex: none; }
.sh-ic.drag { width: 7px; height: 13px; margin-left: -8px; fill: #b8babd; stroke: none; }
.sh-ic:last-child { margin-left: 22px; }
.genai { display: flex; align-items: center; gap: 6px; height: 30px; margin: 10px 0 0 -16px; color: #3038b4; font-size: 14px; font-weight: 600; white-space: nowrap; }
.gen-ic { width: 18px; height: 18px; fill: none; stroke: #3038b4; stroke-width: 1.100; flex: none; }
.sec4 { height: 73px; padding: 12px 0 0; }
.thumbs { display: block; width: 133px; height: 12px; }
.moreshapes { display: block; width: 133px; height: 32px; border: 0; border-radius: 4px; background: #3038b4; color: #fff; font: 700 13.500px Inter, sans-serif; }
.importrow { flex: 1; display: flex; align-items: center; gap: 7px; padding-left: 17px; color: #3038b4; font-size: 13.500px; font-weight: 600; }
.imp-ic { width: 19px; height: 17px; fill: none; stroke: #3038b4; stroke-width: 1.100; }
.panel-scroll { position: absolute; left: 126px; top: 233px; width: 5px; height: 282px; border-radius: 3px; background: #c5c8cb; }

.canvas { flex: 1; position: relative; overflow: hidden; background-color: #fff;
  background-image:
    linear-gradient(to right, #dbdcde 1px, transparent 1px),
    linear-gradient(to bottom, #dbdcde 1px, transparent 1px),
    linear-gradient(to right, #eeeef0 1px, transparent 1px),
    linear-gradient(to bottom, #eeeef0 1px, transparent 1px);
  background-size: 96.900px 96.900px, 96.900px 96.900px, 24.225px 24.225px, 24.225px 24.225px;
  background-position: 62px 45.500px, 62px 45.500px, 13.700px 21.300px, 13.700px 21.300px;
}
.diagram { position: absolute; left: 0; top: 0; }
.edges line { stroke: #555; stroke-width: .9; }
.head { fill: #000; }
.nodes ellipse { fill: #fff; stroke: #000; stroke-width: 1.200; }
.actor circle { fill: none; stroke: #111; stroke-width: 1.200; }
.actor path { fill: none; stroke: #222; stroke-width: 1.200; }
.lab text { font: 400 11px "Liberation Sans", sans-serif; fill: #3f4247; text-anchor: middle; letter-spacing: -.15px; white-space: pre; }
.note text { font: 400 13.500px "Liberation Sans", sans-serif; fill: #6a6f78; text-anchor: middle; letter-spacing: -.05px; }
.vscroll { position: absolute; right: 3px; top: 308px; width: 6px; height: 250px; border-radius: 3px; background: #c5c8cb; }
.hscroll { position: absolute; left: 307px; bottom: 2px; width: 353px; height: 7px; border-radius: 4px; background: #c5c8cb; }

.statusbar { height: 33px; display: flex; flex: none; border-top: 1px solid #d9dce0; background: #fff; font-size: 14px; }
.pages { display: flex; align-items: center; }
.bi { width: 18px; height: 18px; fill: none; stroke: #333; stroke-width: 1.100; flex: none; }
.bi .wh { fill: #fff; stroke: #333; }
.list { margin-left: 13px; }
.gridi { margin-left: 18px; }
.page { height: 28px; margin-left: 18px; border-radius: 0 0 4px 4px; padding: 3px 9px 0; display: flex; align-items: center; background: #eff0f2; color: #333; align-self: flex-start; white-space: nowrap; }
.page.on { background: #68696d; color: #eee; width: 85px; margin-left: 18px; justify-content: space-between; padding: 3px 6px 0 8px; }
.page.on .tri { border-top-color: #fff; }
.page:not(.on) { width: 62px; margin-left: 4px; }
.addp { margin-left: 18px; }
.status-r { margin-left: auto; display: flex; height: 100%; }
.st { display: flex; align-items: center; justify-content: center; border-left: 1px solid #d9dce0; flex: none; }
.st-sel { width: 200px; gap: 7px; justify-content: flex-start; padding-left: 14px; }
.count { width: 15px; height: 15px; border-radius: 50%; background: #d6d7fb; color: #3038b4; font-size: 9.500px; font-weight: 700; text-align: center; line-height: 15px; margin-left: 1px; }
.st-lay { width: 33px; }
.st-a { width: 34px; }
.st-zoom { width: 118px; justify-content: space-between; padding: 0 9px; }
.zoomi { width: 15px; height: 15px; stroke-width: 1.400; }
.st-full { width: 40px; }
.st-help { width: 41px; }
```
